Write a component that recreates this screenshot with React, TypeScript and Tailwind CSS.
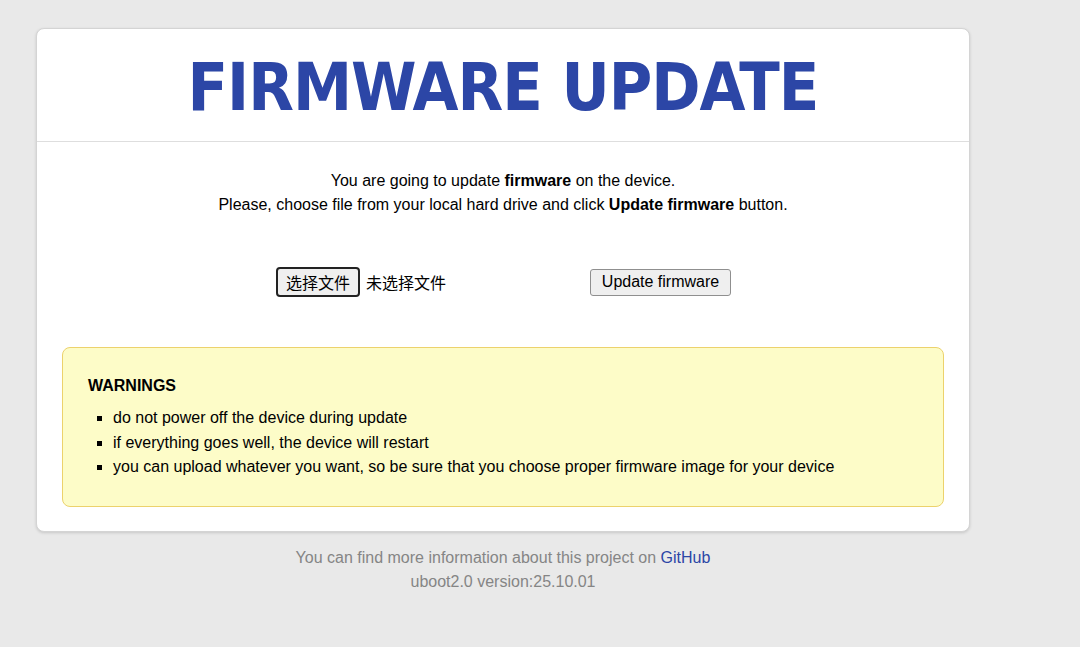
const App = () => {
    return (
        <div className="min-h-[647px] w-full bg-[#e9e9e9] pt-[28px] font-['Liberation_Sans',Arial,sans-serif] text-[16px] text-black">
            <div className="ml-[36px] w-[934px] rounded-[8px] border border-[#d4d4d4] bg-white shadow-[0_1px_3px_rgba(0,0,0,0.15)]">
                <div className="flex h-[113px] items-center justify-center border-b border-[#dedede]">
                    <h1 className="pt-[5px] font-['DejaVu_Sans_Condensed','DejaVu_Sans',sans-serif] text-[66px] leading-none font-bold tracking-[-1px] text-[#2c46a6] [font-stretch:condensed]">
                        FIRMWARE UPDATE
                    </h1>
                </div>
                <div className="px-[25px] pt-[27px] pb-[24px]">
                    <p className="text-center leading-[24px]">
                        You are going to update <b>firmware</b> on the device.
                        <br />
                        Please, choose file from your local hard drive and click <b>Update firmware</b> button.
                    </p>
                    <div className="mt-[50px] flex items-center">
                        <div className="ml-[214px] flex items-center">
                            <button className="h-[30px] w-[84px] rounded-[4px] border-2 border-[#222] bg-[#efefef] font-['Noto_Sans_CJK_SC',sans-serif] text-[16px] leading-none">
                                选择文件
                            </button>
                            <span className="ml-[6px] font-['Noto_Sans_CJK_SC',sans-serif]">未选择文件</span>
                        </div>
                        <button className="ml-[144px] h-[27px] w-[141px] rounded-[3px] border border-[#8f8f8f] bg-[#efefef] text-[16px] leading-none">
                            Update firmware
                        </button>
                    </div>
                    <div className="mt-[50px] rounded-[8px] border border-[#ecd26c] bg-[#fdfcc8] px-[25px] pt-[27px] pb-[26px]">
                        <h3 className="font-bold leading-[22px]">WARNINGS</h3>
                        <ul className="mt-[9px] list-[square] pl-[25px] leading-[24.5px]">
                            <li>do not power off the device during update</li>
                            <li>if everything goes well, the device will restart</li>
                            <li>you can upload whatever you want, so be sure that you choose proper firmware image for your device</li>
                        </ul>
                    </div>
                </div>
            </div>
            <div className="mt-[14px] w-[1006px] text-center leading-[24px] text-[#858585]">
                <p>
                    You can find more information about this project on{" "}
                    <a className="text-[#2c46a6]" href="#">GitHub</a>
                </p>
                <p>uboot2.0 version:25.10.01</p>
            </div>
        </div>
    )
}

export default App
